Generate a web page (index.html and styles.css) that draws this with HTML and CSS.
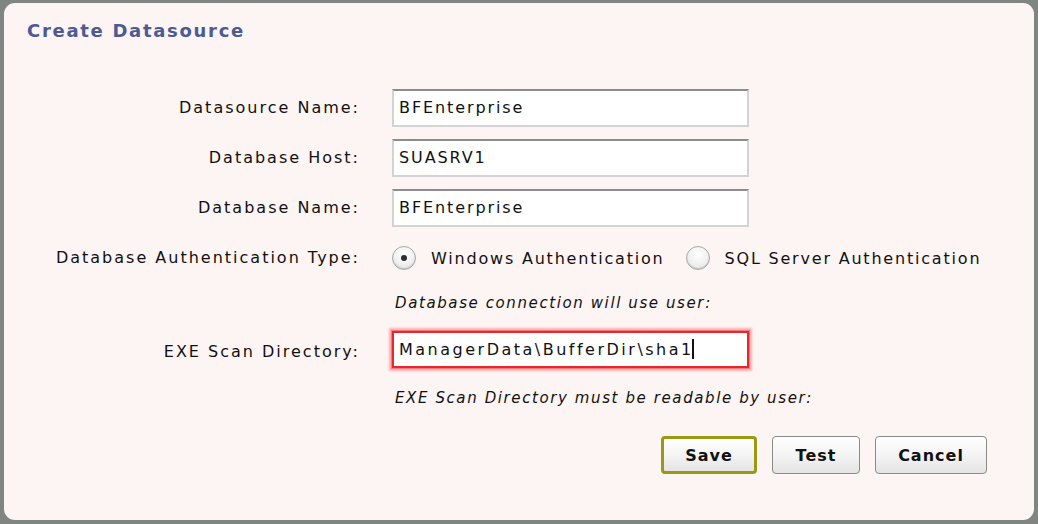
FILE: index.html
```html
<!DOCTYPE html>
<html>
<head>
<meta charset="utf-8">
<link rel="stylesheet" href="styles.css">
</head>
<body>
<div class="dialog">
  <h1 class="title">Create Datasource</h1>
  <div class="form">
    <label class="lbl">Datasource Name:</label>
    <div class="field"><div class="input">BFEnterprise</div></div>
    <label class="lbl">Database Host:</label>
    <div class="field"><div class="input">SUASRV1</div></div>
    <label class="lbl">Database Name:</label>
    <div class="field"><div class="input">BFEnterprise</div></div>
    <label class="lbl lbl-radio">Database Authentication Type:</label>
    <div class="field radios">
      <span class="radio on"></span><span class="rtext">Windows Authentication</span>
      <span class="radio"></span><span class="rtext">SQL Server Authentication</span>
    </div>
    <div></div>
    <div class="note">Database connection will use user:</div>
    <label class="lbl lbl-exe">EXE Scan Directory:</label>
    <div class="field"><div class="input focus"><span class="scroll">ManagerData\BufferDir\sha1</span><span class="caret"></span></div></div>
    <div></div>
    <div class="note note2">EXE Scan Directory must be readable by user:</div>
  </div>
  <div class="buttons">
    <button class="btn save">Save</button>
    <button class="btn test">Test</button>
    <button class="btn cancel">Cancel</button>
  </div>
</div>
</body>
</html>
```
FILE: styles.css
```css
html, body {
  margin: 0;
  padding: 0;
  background: #7f8580;
  width: 1038px;
  height: 524px;
  overflow: hidden;
}
body {
  padding: 3px 4px 4px 4px;
  box-sizing: border-box;
  font-family: "DejaVu Sans", Verdana, sans-serif;
  color: #111;
}
.dialog {
  background: #fdf4f4;
  height: 517px;
  border-radius: 11px;
  box-sizing: border-box;
  padding: 16px 0 0 23px;
  display: flex;
  flex-direction: column;
}
.title {
  margin: 0;
  font-size: 18px;
  font-weight: bold;
  letter-spacing: 1.7px;
  color: #4c5b93;
  line-height: 22px;
  padding-top: 1px;
}
.form {
  display: grid;
  grid-template-columns: 333px 600px;
  column-gap: 32px;
  margin-top: 47px;
  font-size: 16px;
  letter-spacing: 2px;
}
.lbl {
  text-align: right;
  line-height: 38px;
  height: 38px;
  margin-bottom: 12px;
  white-space: nowrap;
}
.field {
  height: 38px;
  margin-bottom: 12px;
}
.input {
  width: 357px;
  height: 38px;
  box-sizing: border-box;
  border: 2px solid #d4d2d2;
  border-top-color: #8c8c8c;
  background: #fff;
  padding-left: 5px;
  line-height: 33px;
  white-space: nowrap;
  overflow: hidden;
  letter-spacing: 1.9px;
}
.input.focus {
  border: 2px solid #e8262e;
  box-shadow: 0 0 0 1px #f37a7e, 0 0 2px 3px #f9b0b0;
  height: 37px;
  margin-top: 4px;
  padding-left: 5px;
  letter-spacing: 2.5px;
}
.caret {
  display: inline-block;
  width: 2px;
  height: 20px;
  background: #111;
  vertical-align: -4px;
  margin-left: -2px;
}
.lbl-radio, .radios {
  margin-bottom: 14px;
}
.radios {
  display: flex;
  align-items: center;
  height: 38px;
  white-space: nowrap;
}
.radio {
  width: 24px;
  height: 24px;
  border-radius: 50%;
  box-sizing: border-box;
  border: 1px solid #a8a8a8;
  background: radial-gradient(circle at 50% 35%, #ffffff 0%, #f0f0f0 55%, #d8d8d8 100%);
  box-shadow: inset 0 -1px 1px rgba(0,0,0,0.15);
  position: relative;
  flex: none;
}
.radio.on::after {
  content: "";
  position: absolute;
  left: 8px;
  top: 8px;
  width: 6px;
  height: 6px;
  border-radius: 50%;
  background: #2b2f3a;
}
.rtext {
  margin-left: 15px;
  margin-right: 21px;
  letter-spacing: 1.8px;
}
.note {
  font-style: italic;
  font-size: 15px;
  letter-spacing: 1.6px;
  height: 24px;
  line-height: 24px;
  padding-left: 3px;
  margin-bottom: 12px;
  white-space: nowrap;
}
.lbl-exe {
  margin-top: 6px;
}
.note2 {
  margin-top: 3px;
}
.buttons {
  display: flex;
  justify-content: flex-end;
  gap: 15px;
  padding-right: 47px;
  margin-top: 14px;
}
.btn {
  height: 38px;
  font-family: "DejaVu Sans", Verdana, sans-serif;
  font-weight: bold;
  font-size: 16px;
  letter-spacing: 1px;
  color: #111;
  border: 1px solid #8a8a8a;
  border-radius: 4px;
  background: linear-gradient(#ffffff, #f4f4f4 50%, #e4e4e4);
  padding: 0;
}
.save { width: 96px; border: 3px solid #999a10; }
.test { width: 88px; }
.cancel { width: 112px; }
```
